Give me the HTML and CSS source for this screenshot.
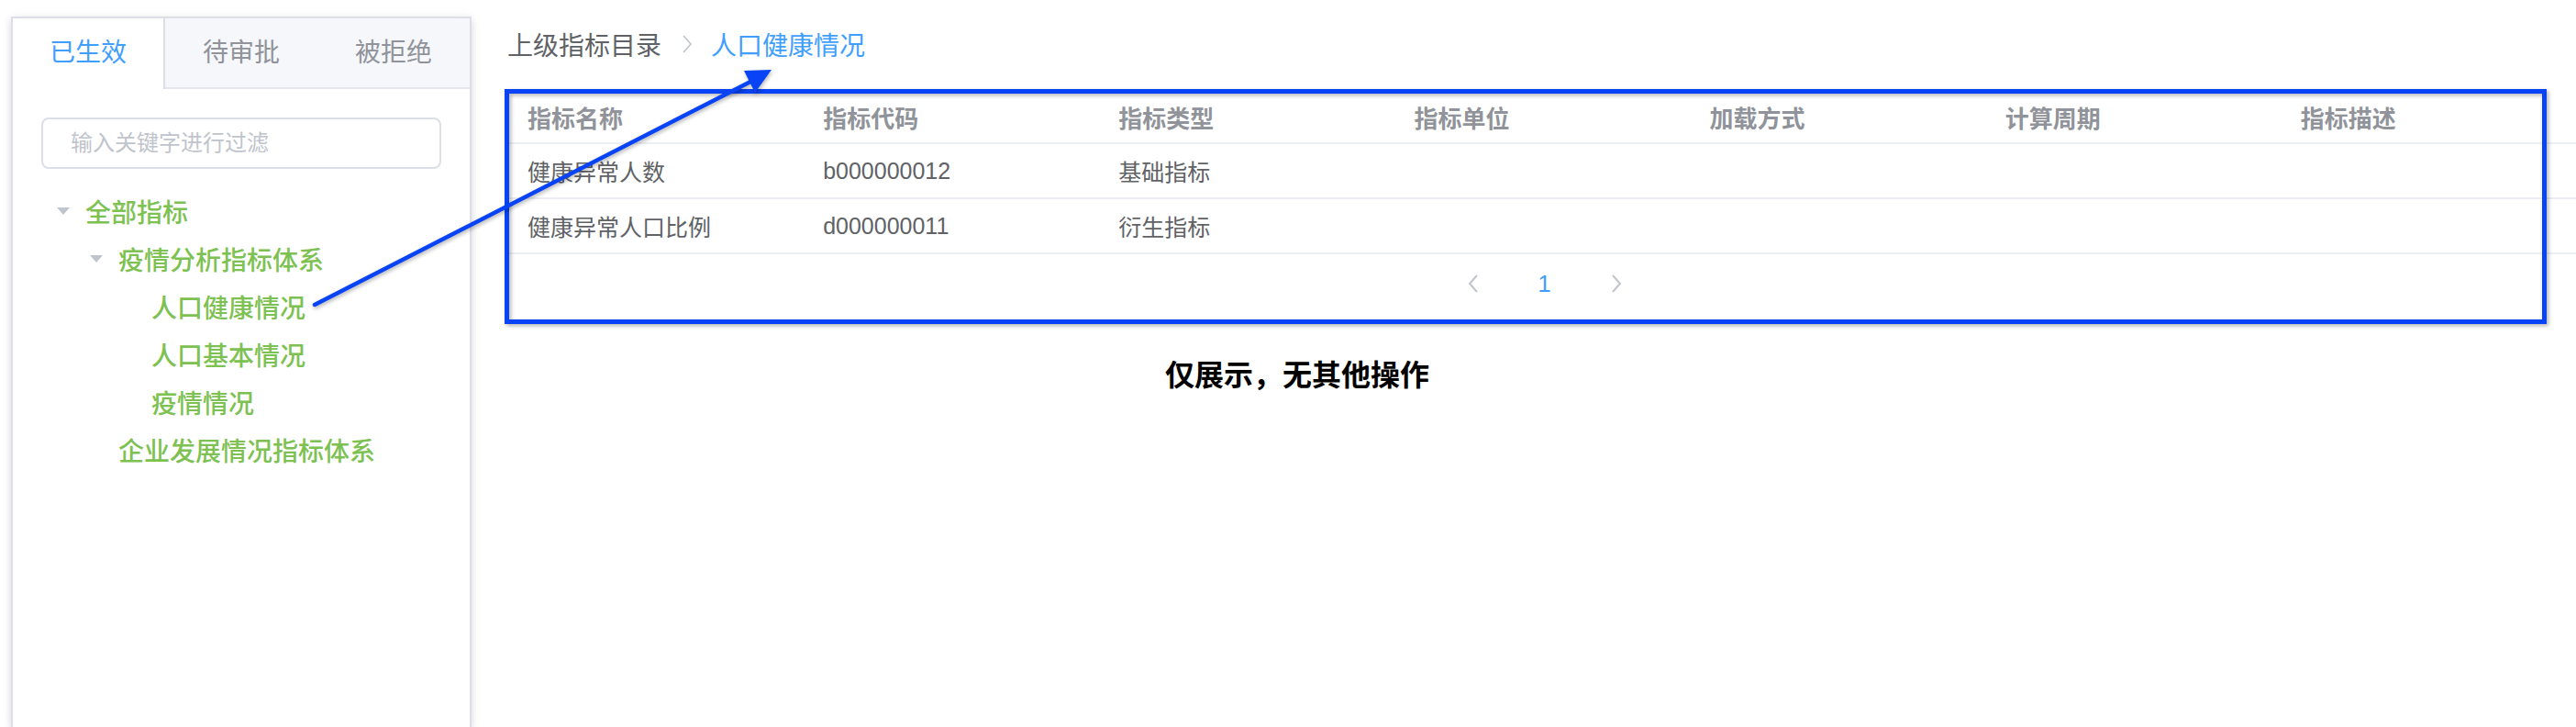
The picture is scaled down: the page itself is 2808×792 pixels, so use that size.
FILE: index.html
```html
<!DOCTYPE html>
<html lang="zh-CN">
<head>
<meta charset="utf-8">
<title>指标目录</title>
<link rel="stylesheet" href="styles.css">
</head>
<body>
<div class="page">
  <aside class="sidebar">
    <div class="tabs">
      <div class="tab active">已生效</div>
      <div class="tab">待审批</div>
      <div class="tab">被拒绝</div>
    </div>
    <div class="panel">
      <input class="filter" type="text" placeholder="输入关键字进行过滤">
      <ul class="tree">
        <li class="node l1"><span class="caret open"></span><span class="label">全部指标</span></li>
        <li class="node l2"><span class="caret open"></span><span class="label">疫情分析指标体系</span></li>
        <li class="node l3"><span class="caret"></span><span class="label">人口健康情况</span></li>
        <li class="node l3"><span class="caret"></span><span class="label">人口基本情况</span></li>
        <li class="node l3"><span class="caret"></span><span class="label">疫情情况</span></li>
        <li class="node l2"><span class="caret"></span><span class="label">企业发展情况指标体系</span></li>
      </ul>
    </div>
  </aside>

  <main class="main">
    <nav class="crumb">
      <span class="crumb-item">上级指标目录</span>
      <svg class="crumb-sep" width="12" height="22" viewBox="0 0 12 22"><polyline points="2,2 10,11 2,20" fill="none" stroke="#c0c4cc" stroke-width="1.6"/></svg>
      <span class="crumb-item cur">人口健康情况</span>
    </nav>

    <div class="grid">
      <div class="row head">
        <div class="cell">指标名称</div>
        <div class="cell">指标代码</div>
        <div class="cell">指标类型</div>
        <div class="cell">指标单位</div>
        <div class="cell">加载方式</div>
        <div class="cell">计算周期</div>
        <div class="cell">指标描述</div>
      </div>
      <div class="row body">
        <div class="cell">健康异常人数</div>
        <div class="cell">b000000012</div>
        <div class="cell">基础指标</div>
        <div class="cell"></div>
        <div class="cell"></div>
        <div class="cell"></div>
        <div class="cell"></div>
      </div>
      <div class="row body">
        <div class="cell">健康异常人口比例</div>
        <div class="cell">d000000011</div>
        <div class="cell">衍生指标</div>
        <div class="cell"></div>
        <div class="cell"></div>
        <div class="cell"></div>
        <div class="cell"></div>
      </div>
    </div>

    <div class="pager">
      <span class="pg-btn"><svg width="12" height="20" viewBox="0 0 12 20"><polyline points="10,1 2,10 10,19" fill="none" stroke="#c0c4cc" stroke-width="2"/></svg></span>
      <span class="pg-num">1</span>
      <span class="pg-btn"><svg width="12" height="20" viewBox="0 0 12 20"><polyline points="2,1 10,10 2,19" fill="none" stroke="#c0c4cc" stroke-width="2"/></svg></span>
    </div>

    <p class="note">仅展示，无其他操作</p>
  </main>
</div>

<div class="mark-box"></div>
<svg class="mark-arrow" width="2808" height="792" viewBox="0 0 2808 792">
  <line x1="343" y1="332" x2="820" y2="88" stroke="#0843f5" stroke-width="4.5" stroke-linecap="round"/>
  <polygon points="841,76 811,77 823,101" fill="#0843f5"/>
</svg>
</body>
</html>
```

FILE: styles.css
```css
html, body {
  margin: 0;
  padding: 0;
  background: #fff;
  overflow: hidden;
}

body {
  position: relative;
  width: 2808px;
  height: 792px;
  font-family: "Liberation Sans", "Noto Sans CJK SC", sans-serif;
}

.page {
  display: flex;
  align-items: flex-start;
  height: 792px;
  overflow: hidden;
}

/* ---------- sidebar ---------- */
.sidebar {
  flex: none;
  box-sizing: border-box;
  width: 502px;
  height: 774px;
  margin: 18px 0 0 12px;
  border: 2px solid #dcdfe6;
  border-bottom: 0;
  background: #fff;
  box-shadow: 0 4px 8px rgba(0, 0, 0, 0.12), 0 0 12px rgba(0, 0, 0, 0.05);
}

.tabs {
  display: flex;
  height: 75px;
  background: #f5f7fa;
  border-bottom: 2px solid #e4e7ed;
}

.tab {
  box-sizing: border-box;
  width: 166px;
  height: 75px;
  line-height: 75px;
  text-align: center;
  font-size: 28px;
  color: #909399;
}

.tab.active {
  width: 166px;
  height: 77px;
  background: #fff;
  color: #409eff;
  border-right: 2px solid #dcdfe6;
}

.panel {
  padding: 31px 31px 0;
}

.filter {
  display: block;
  box-sizing: border-box;
  width: 100%;
  height: 56px;
  margin: 0;
  padding: 0 30px;
  border: 2px solid #dcdfe6;
  border-radius: 8px;
  outline: none;
  font-family: inherit;
  font-size: 24px;
  color: #606266;
  background: #fff;
}

.filter::placeholder {
  color: #c0c4cc;
}

.tree {
  list-style: none;
  margin: 20px 0 0;
  padding: 0;
}

.node {
  display: flex;
  align-items: center;
  height: 52px;
  font-size: 28px;
  font-weight: 500;
  color: #7dc152;
  white-space: nowrap;
}

.node.l2 { padding-left: 36px; }
.node.l3 { padding-left: 72px; }

.caret {
  flex: none;
  width: 48px;
  display: flex;
  justify-content: center;
  align-items: center;
}

.caret.open::before {
  content: "";
  display: block;
  width: 0;
  height: 0;
  border-left: 7px solid transparent;
  border-right: 7px solid transparent;
  border-top: 8px solid #c0c4cc;
}

/* ---------- main ---------- */
.main {
  flex: 1;
  min-width: 0;
  padding: 28px 0 0 39px;
}

.crumb {
  display: flex;
  align-items: center;
  height: 40px;
  font-size: 28px;
  color: #606266;
}

.crumb-sep {
  margin: 0 20px 0 22px;
}

.crumb-item.cur {
  color: #409eff;
}

.grid {
  margin-top: 32px;
}

.row {
  display: grid;
  grid-template-columns: repeat(7, 1fr);
  align-items: center;
  border-bottom: 2px solid #ebeef5;
}

.row.head {
  height: 55px;
  font-size: 26px;
  font-weight: 700;
  color: #909399;
}

.row.body {
  height: 58px;
  font-size: 25px;
  color: #606266;
}

.cell {
  padding-left: 22px;
  white-space: nowrap;
}

.pager {
  display: flex;
  justify-content: center;
  align-items: center;
  height: 64px;
  padding-left: 6px;
}

.pg-btn,
.pg-num {
  width: 78px;
  display: flex;
  justify-content: center;
  align-items: center;
}

.pg-num {
  font-size: 26px;
  font-weight: 400;
  color: #409eff;
}

.note {
  margin: 43px 0 0;
  padding-left: 717px;
  font-size: 32px;
  line-height: 44px;
  font-weight: 700;
  color: #000;
  font-family: "Noto Sans CJK SC", sans-serif;
}

/* ---------- annotations laid over the page ---------- */
.mark-box {
  position: absolute;
  left: 550px;
  top: 97px;
  width: 2226px;
  height: 256px;
  box-sizing: border-box;
  border: 5px solid #0843f5;
  filter: drop-shadow(2px 2px 2px rgba(0, 0, 0, 0.3));
  pointer-events: none;
}

.mark-arrow {
  position: absolute;
  left: 0;
  top: 0;
  pointer-events: none;
  filter: drop-shadow(1px 2px 2px rgba(0, 0, 0, 0.3));
}
```
